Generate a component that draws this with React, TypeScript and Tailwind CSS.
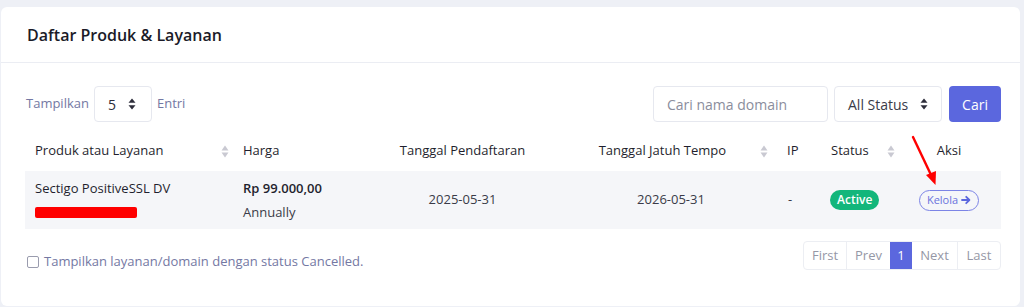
import React from "react";

const font = { fontFamily: '"Open Sans", "Noto Sans", sans-serif' };

const SortIcon = () => (
  <svg width="8" height="13" viewBox="0 0 8 13" className="shrink-0">
    <path d="M4 0.5 L7.5 5.5 H0.5 Z" fill="#c9c9d2" />
    <path d="M4 12.5 L7.5 7.5 H0.5 Z" fill="#c9c9d2" />
  </svg>
);

const SelectArrows = () => (
  <svg width="8" height="12" viewBox="0 0 8 12" className="shrink-0">
    <path d="M4 0.5 L7.5 4.8 H0.5 Z" fill="#2d2d3a" />
    <path d="M4 11.5 L7.5 7.2 H0.5 Z" fill="#2d2d3a" />
  </svg>
);

export default function App() {
  return (
    <div className="w-[1024px] h-[307px] bg-[#eef0f6] pt-[7px] pl-px overflow-hidden" style={font}>
      <div className="relative w-[1019px] h-[299px] bg-white rounded-md">
        {/* header */}
        <div className="h-[56px] flex items-center px-[26px] border-b border-[#ebedf3]">
          <h2 className="text-[16px] font-semibold text-[#1b1b28]">Daftar Produk &amp; Layanan</h2>
        </div>

        <div className="pl-[24px] pr-[19px]">
          {/* controls */}
          <div className="flex items-center justify-between pt-[23px]">
            <div className="flex items-center gap-[5px] text-[13px] text-[#7478a3]">
              <span className="pl-px">Tampilkan</span>
              <div className="w-[58px] h-[36px] border border-[#e6e8ef] rounded flex items-center justify-between pl-[13px] pr-[15px] text-[#2d2d3a] text-[14px]">
                <span>5</span>
                <SelectArrows />
              </div>
              <span>Entri</span>
            </div>
            <div className="flex items-center">
              <div className="w-[175px] h-[36px] border border-[#e6e8ef] rounded flex items-center px-[13px] text-[14px] text-[#8a8d9c]">
                Cari nama domain
              </div>
              <div className="ml-[6px] w-[108px] h-[36px] border border-[#e6e8ef] rounded flex items-center justify-between pl-[13px] pr-[13px] text-[14px] text-[#3a3b48]">
                <span>All Status</span>
                <SelectArrows />
              </div>
              <button className="ml-[7px] w-[52px] h-[36px] rounded bg-[#5b67de] text-white text-[14px]">Cari</button>
            </div>
          </div>

          {/* table */}
          <table className="mt-[9px] w-[976px] table-fixed border-collapse text-[13px]">
            <colgroup>
              <col className="w-[209px]" />
              <col className="w-[125px]" />
              <col className="w-[207px]" />
              <col className="w-[210px]" />
              <col className="w-[46px]" />
              <col className="w-[85px]" />
              <col className="w-[94px]" />
            </colgroup>
            <thead>
              <tr className="h-[40px] text-[#1f1f2e]">
                <th className="font-medium text-left pl-[10px] pr-[5px]">
                  <div className="flex items-center justify-between">
                    <span>Produk atau Layanan</span>
                    <SortIcon />
                  </div>
                </th>
                <th className="font-medium text-left pl-[9px]">Harga</th>
                <th className="font-medium text-center">Tanggal Pendaftaran</th>
                <th className="font-medium pr-[8px]">
                  <div className="flex items-center justify-end gap-[34px]">
                    <span>Tanggal Jatuh Tempo</span>
                    <SortIcon />
                  </div>
                </th>
                <th className="font-medium text-left pl-[11px]">IP</th>
                <th className="font-medium pr-[12px]">
                  <div className="flex items-center justify-between pl-[9px]">
                    <span>Status</span>
                    <SortIcon />
                  </div>
                </th>
                <th className="font-medium text-center pr-[10px]">Aksi</th>
              </tr>
            </thead>
            <tbody>
              <tr className="h-[58px] bg-[#f5f6f9] text-[#3a3b48]">
                <td className="pl-[10px] align-top pt-[8px]">
                  <div className="font-medium text-[#1f1f2e]">Sectigo PositiveSSL DV</div>
                  <div className="mt-[8px] w-[102px] h-[11px] bg-[#ff0000] rounded-[2px]" />
                </td>
                <td className="pl-[9px] align-top pt-[8px]">
                  <div className="font-semibold text-[#1f1f2e]">Rp 99.000,00</div>
                  <div className="mt-[4px]">Annually</div>
                </td>
                <td className="text-center">2025-05-31</td>
                <td className="text-center">2026-05-31</td>
                <td className="pl-[12px]">-</td>
                <td className="pl-[8px]">
                  <span className="inline-flex items-center h-[20px] px-[7px] rounded-full bg-[#13b67b] text-white text-[12px] font-semibold">Active</span>
                </td>
                <td className="text-center pr-[10px]">
                  <span className="inline-flex items-center gap-[3px] h-[21px] px-[7px] rounded-full border border-[#7c84e6] text-[#6a73dd] text-[11px]">
                    Kelola
                    <svg width="10" height="10" viewBox="0 0 10 10">
                      <path d="M1 5 H8.2 M5.2 1.8 L8.4 5 L5.2 8.2" stroke="#5b67de" strokeWidth="1.8" fill="none" strokeLinecap="round" strokeLinejoin="round" />
                    </svg>
                  </span>
                </td>
              </tr>
            </tbody>
          </table>

          {/* footer */}
          <div className="flex items-start justify-between mt-[12px]">
            <label className="flex items-center gap-[5px] pl-[2px] pt-[11px] text-[13px] text-[#7478a3]">
              <span className="w-[12px] h-[12px] border border-[#9a9cae] rounded-[2px] bg-white" />
              <span>Tampilkan layanan/domain dengan status Cancelled.</span>
            </label>
            <div className="flex h-[29px] border border-[#eceef3] rounded text-[13px] text-[#9597a6]">
              <span className="w-[43px] flex items-center justify-center border-r border-[#eceef3]">First</span>
              <span className="w-[43px] flex items-center justify-center">Prev</span>
              <span className="w-[22px] flex items-center justify-center bg-[#5b67de] text-white">1</span>
              <span className="w-[46px] flex items-center justify-center border-r border-[#eceef3]">Next</span>
              <span className="w-[42px] flex items-center justify-center">Last</span>
            </div>
          </div>
        </div>

        {/* red annotation arrow */}
        <svg className="absolute left-[906px] top-[128px] pointer-events-none" width="36" height="56" viewBox="0 0 36 56">
          <path d="M6 2 L25 42" stroke="#ff0000" strokeWidth="2.4" strokeLinecap="round" />
          <path d="M19 40 L28.5 50 L29 36 Z" fill="#ff0000" />
        </svg>
      </div>
    </div>
  );
}
